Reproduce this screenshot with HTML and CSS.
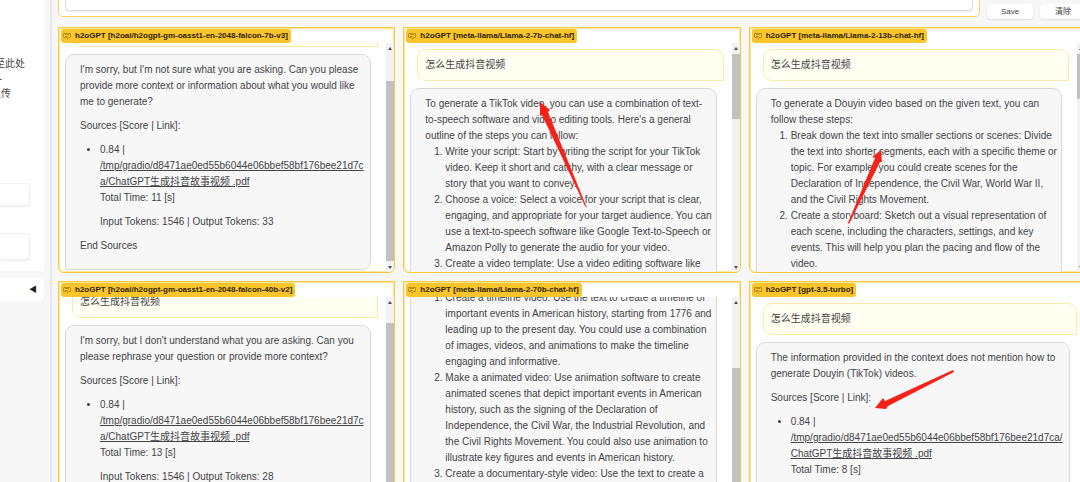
FILE: index.html
```
<!DOCTYPE html>
<html lang="zh">
<head>
<meta charset="utf-8">
<title>h2oGPT</title>
<link rel="stylesheet" href="styles.css">
</head>
<body>
<svg class="defs" aria-hidden="true">
  <symbol id="chat" viewBox="0 0 32 32">
    <path d="M17.7 30 16 29l4-7h6a2 2 0 0 0 2-2V8a2 2 0 0 0-2-2H6a2 2 0 0 0-2 2v12a2 2 0 0 0 2 2h9v2H6a4 4 0 0 1-4-4V8a4 4 0 0 1 4-4h20a4 4 0 0 1 4 4v12a4 4 0 0 1-4 4h-4.800zM8 10h16v2H8zM8 16h10v2H8z"/>
  </symbol>
</svg>
<div class="app">
  <aside class="sidebar">
    <section class="card upload">
      <div class="drop">
        <span>将文件拖放至此处</span>
        <span class="click">- 或 -</span>
        <span class="click">点击上传</span>
      </div>
      <input class="field" type="text" aria-label="URL">
      <input class="field tall" type="text" aria-label="Text">
    </section>
    <section class="card fold"><button class="toggle" type="button" aria-label="Expand">◀</button></section>
  </aside>
  <main class="main">
    <div class="top">
      <div class="prompt"><textarea class="prompt-input" aria-label="Prompt"></textarea></div>
      <button class="btn" type="button">Save</button>
      <button class="btn" type="button">清除</button>
    </div>
    <div class="grid">
      <section class="panel">
        <h2 class="label"><svg class="icon"><use href="#chat"/></svg>h2oGPT [h2oai/h2ogpt-gm-oasst1-en-2048-falcon-7b-v3]</h2>
        <div class="view">
          <div class="chat scroll-a">
            <div class="user">怎么生成抖音视频</div>
            <div class="bot">
              <p>I'm sorry, but I'm not sure what you are asking. Can you please<br>provide more context or information about what you would like<br>me to generate?</p>
              <p>Sources [Score | Link]:</p>
              <ul>
                <li><p>0.84 |<br><a href="#">/tmp/gradio/d8471ae0ed55b6044e06bbef58bf176bee21d7c<br>a/ChatGPT生成抖音故事视频 .pdf</a><br>Total Time: 11 [s]</p><p>Input Tokens: 1546 | Output Tokens: 33</p></li>
              </ul>
              <p>End Sources</p>
            </div>
          </div>
          <div class="bar"><i class="up"></i><i class="thumb thumb-a"></i><i class="down"></i></div>
        </div>
      </section>
      <section class="panel">
        <h2 class="label"><svg class="icon"><use href="#chat"/></svg>h2oGPT [meta-llama/Llama-2-7b-chat-hf]</h2>
        <div class="view">
          <div class="chat">
            <div class="user">怎么生成抖音视频</div>
            <div class="bot tight">
              <p>To generate a TikTok video, you can use a combination of text-<br>to-speech software and video editing tools. Here's a general<br>outline of the steps you can follow:</p>
              <ol>
                <li>Write your script: Start by writing the script for your TikTok<br>video. Keep it short and catchy, with a clear message or<br>story that you want to convey.</li>
                <li>Choose a voice: Select a voice for your script that is clear,<br>engaging, and appropriate for your target audience. You can<br>use a text-to-speech software like Google Text-to-Speech or<br>Amazon Polly to generate the audio for your video.</li>
                <li>Create a video template: Use a video editing software like</li>
              </ol>
            </div>
          </div>
          <div class="bar"><i class="up"></i><i class="thumb thumb-b"></i><i class="down"></i></div>
        </div>
      </section>
      <section class="panel">
        <h2 class="label"><svg class="icon"><use href="#chat"/></svg>h2oGPT [meta-llama/Llama-2-13b-chat-hf]</h2>
        <div class="view">
          <div class="chat">
            <div class="user">怎么生成抖音视频</div>
            <div class="bot tight">
              <p>To generate a Douyin video based on the given text, you can<br>follow these steps:</p>
              <ol>
                <li>Break down the text into smaller sections or scenes: Divide<br>the text into shorter segments, each with a specific theme or<br>topic. For example, you could create scenes for the<br>Declaration of Independence, the Civil War, World War II,<br>and the Civil Rights Movement.</li>
                <li>Create a storyboard: Sketch out a visual representation of<br>each scene, including the characters, settings, and key<br>events. This will help you plan the pacing and flow of the<br>video.</li>
              </ol>
            </div>
          </div>
          <div class="bar"><i class="up"></i><i class="thumb thumb-c"></i><i class="down"></i></div>
        </div>
      </section>
      <section class="panel">
        <h2 class="label"><svg class="icon"><use href="#chat"/></svg>h2oGPT [h2oai/h2ogpt-gm-oasst1-en-2048-falcon-40b-v2]</h2>
        <div class="view">
          <div class="chat scroll-d">
            <div class="user">怎么生成抖音视频</div>
            <div class="bot">
              <p>I'm sorry, but I don't understand what you are asking. Can you<br>please rephrase your question or provide more context?</p>
              <p>Sources [Score | Link]:</p>
              <ul>
                <li><p>0.84 |<br><a href="#">/tmp/gradio/d8471ae0ed55b6044e06bbef58bf176bee21d7c<br>a/ChatGPT生成抖音故事视频 .pdf</a><br>Total Time: 13 [s]</p><p>Input Tokens: 1546 | Output Tokens: 28</p></li>
              </ul>
            </div>
          </div>
          <div class="bar"><i class="up"></i><i class="thumb thumb-d"></i><i class="down"></i></div>
        </div>
      </section>
      <section class="panel">
        <h2 class="label"><svg class="icon"><use href="#chat"/></svg>h2oGPT [meta-llama/Llama-2-70b-chat-hf]</h2>
        <div class="view">
          <div class="chat scroll-e">
            <div class="bot tight">
              <ol>
                <li>Create a timeline video: Use the text to create a timeline of<br>important events in American history, starting from 1776 and<br>leading up to the present day. You could use a combination<br>of images, videos, and animations to make the timeline<br>engaging and informative.</li>
                <li>Make a animated video: Use animation software to create<br>animated scenes that depict important events in American<br>history, such as the signing of the Declaration of<br>Independence, the Civil War, the Industrial Revolution, and<br>the Civil Rights Movement. You could also use animation to<br>illustrate key figures and events in American history.</li>
                <li>Create a documentary-style video: Use the text to create a</li>
              </ol>
            </div>
          </div>
          <div class="bar"><i class="up"></i><i class="thumb thumb-e"></i><i class="down"></i></div>
        </div>
      </section>
      <section class="panel">
        <h2 class="label"><svg class="icon"><use href="#chat"/></svg>h2oGPT [gpt-3.5-turbo]</h2>
        <div class="view">
          <div class="chat">
            <div class="user">怎么生成抖音视频</div>
            <div class="bot">
              <p>The information provided in the context does not mention how to<br>generate Douyin (TikTok) videos.</p>
              <p>Sources [Score | Link]:</p>
              <ul>
                <li><p>0.84 |<br><a href="#">/tmp/gradio/d8471ae0ed55b6044e06bbef58bf176bee21d7ca/<br>ChatGPT生成抖音故事视频 .pdf</a><br>Total Time: 8 [s]</p></li>
              </ul>
            </div>
          </div>
        </div>
      </section>
    </div>
  </main>
</div>
<svg class="arrows" width="1080" height="482" viewBox="0 0 1080 482" aria-hidden="true">
  <path d="M540 102 550 110 548 112 587 208 585 206 542 115 540 116Z"/>
  <path d="M881 150 882 162 880 162 849 224 848 223 875 158 872 157Z"/>
  <path d="M875 408 883 398 885 401 953 370 954 372 888 406 886 409Z"/>
</svg>
</body>
</html>
```
FILE: styles.css
```
* { box-sizing: border-box; }
body {
  margin: 0;
  height: 100vh;
  overflow: hidden;
  background: #f7f7f8;
  color: #444446;
  font: 10px/16px "Liberation Sans", Arial, "Noto Sans CJK SC", sans-serif;
}
button, input, textarea { font: inherit; color: inherit; }
p, ul, ol, h2 { margin: 0; }
.defs { position: absolute; width: 0; height: 0; }
.app { display: flex; height: 100vh; overflow: hidden; }

.sidebar {
  flex: 0 0 52px;
  display: flex;
  flex-direction: column;
  gap: 7px;
  padding-right: 6px;
  border-right: 2px solid #e6e6ef;
  overflow: hidden;
}
.card { background: #fff; border-radius: 0 0 4px 0; }
.upload { height: 271px; padding-top: 56px; }
.drop {
  display: flex;
  flex-direction: column;
  align-items: center;
  width: 130px;
  margin: 0 0 82px -80px;
  line-height: 15px;
}
.click { padding-left: 12px; }
.field {
  display: block;
  width: 30px;
  height: 23px;
  margin-bottom: 27px;
  border: 1px solid #f0f0f2;
  border-left: 0;
  border-radius: 0 4px 4px 0;
  box-shadow: 0 1px 2px #eeeef0;
}
.tall { height: 27px; }
.fold { display: flex; justify-content: flex-end; height: 23px; }
.toggle { padding: 0 7px; border: 0; background: none; color: #222; font-size: 8px; }

.main { flex: 1; min-width: 0; margin: 0 -6px 0 6px; }
.top { display: flex; gap: 7px; height: 27px; align-items: flex-start; }
.prompt {
  flex: 1;
  height: 17px;
  padding: 0 6px;
  border: 1px solid #f8d568;
  border-top: 0;
  border-radius: 0 0 5px 5px;
  background: #fff;
}
.prompt-input {
  display: block;
  width: 100%;
  height: 11px;
  padding: 0;
  border: 1px solid #dcdce0;
  border-top: 0;
  border-radius: 0 0 4px 4px;
  box-shadow: 0 1px 1px #ededf0;
  resize: none;
  overflow: hidden;
}
.btn {
  width: 46px;
  height: 15px;
  margin-top: 4px;
  padding: 0;
  border: 0;
  border-radius: 4px;
  background: #fff;
  box-shadow: 0 1px 2px #dcdce0;
  font-size: 8px;
  line-height: 15px;
}

.grid {
  display: grid;
  grid-template-columns: repeat(3, minmax(0, 1fr));
  grid-auto-rows: 246px;
  gap: 8px;
}
.panel {
  display: flex;
  flex-direction: column;
  align-items: flex-start;
  overflow: hidden;
  border: 1px solid #f9c937;
  box-shadow: inset 0 0 0 1px #fde7a0;
  border-radius: 0 0 6px 6px;
  background: #fff;
}
.label {
  display: flex;
  align-items: center;
  gap: 4px;
  height: 14px;
  margin: 1px 0 0 2px;
  padding: 0 3px 0 2px;
  border-radius: 3px;
  background: #fac42b;
  color: #2c2208;
  font-size: 8px;
  line-height: 14px;
  white-space: nowrap;
}
.icon { width: 8px; height: 8px; fill: #7a5c0c; }
.view { display: flex; flex: 1; min-height: 0; width: 100%; overflow: hidden; }
.chat { flex: 1; min-width: 0; padding: 6px 8px 0 6px; }
.scroll-a { margin-top: -34px; }
.scroll-d { margin-top: -17px; }
.scroll-e { margin-top: -21px; }
.user, .bot { border: 1px solid; padding: 7px; }
.user {
  margin: 0 0 7px 7px;
  border-color: #f9eaa8;
  border-radius: 9px 9px 0 9px;
  background: #fffff2;
}
.bot {
  margin-right: 7px;
  padding: 7px 2px 7px 14px;
  border-color: #d9d9dd;
  border-radius: 9px 9px 9px 0;
  background: #f7f7f8;
}
.bot p { margin-bottom: 8px; }
.tight p { margin-bottom: 0; }
.bot ul, .bot ol { padding-left: 20px; }
.bot a { color: inherit; text-decoration: underline; }

.bar {
  flex: 0 0 8px;
  display: flex;
  flex-direction: column;
  align-items: center;
  background: #f1f1f1;
}
.up, .down { border: 2px solid transparent; }
.up { margin: 4px 0 4px; border-bottom: 3px solid #505050; border-top: 0; height: 3px; }
.down { margin: auto 0 3px; border-top: 3px solid #505050; border-bottom: 0; height: 3px; }
.thumb { width: 100%; background: #c1c1c1; }
.thumb-a { height: 180px; margin-top: 27px; }
.thumb-b { height: 65px; }
.thumb-c { height: 45px; }
.thumb-d { height: 160px; margin-top: 15px; }
.thumb-e { height: 120px; margin-top: 60px; }

.arrows { position: absolute; top: 0; left: 0; fill: #f5221a; pointer-events: none; }
```
